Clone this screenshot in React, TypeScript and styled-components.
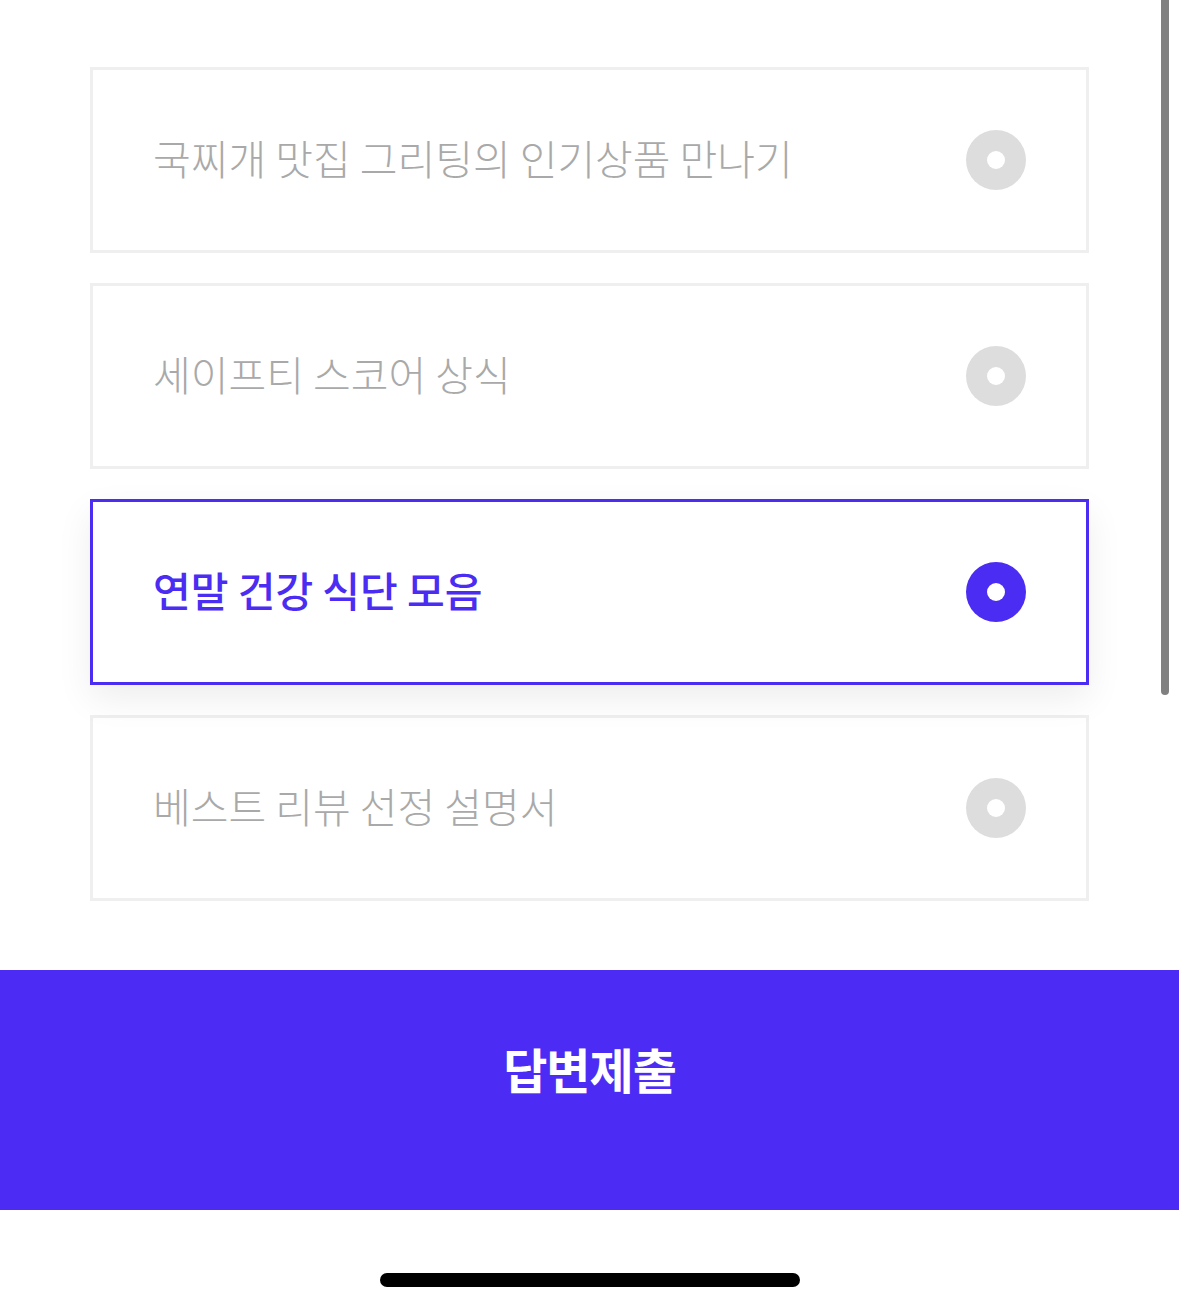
import styled, { createGlobalStyle } from 'styled-components';
import { useState } from 'react';

const GlobalStyle = createGlobalStyle`
  html, body {
    margin: 0;
    padding: 0;
    background: #ffffff;
  }
  body {
    font-family: 'Noto Sans CJK KR', 'Noto Sans', sans-serif;
  }
`;

const Page = styled.div`
  width: 1179px;
  height: 1312px;
  position: relative;
  display: flex;
  flex-direction: column;
  overflow: hidden;
  background: #ffffff;
`;

const OptionList = styled.div`
  display: flex;
  flex-direction: column;
  gap: 30px;
  padding: 67px 90px 0;
`;

const Option = styled.button<{ selected: boolean }>`
  height: 186px;
  box-sizing: border-box;
  display: flex;
  align-items: center;
  justify-content: space-between;
  padding: 0 60px 0 60px;
  background: #ffffff;
  border: 3px solid ${(props) => (props.selected ? '#4b2cf2' : '#efefef')};
  box-shadow: ${(props) =>
    props.selected ? '0 14px 34px rgba(0, 0, 0, 0.07)' : 'none'};
  cursor: pointer;
  text-align: start;
  font-family: inherit;
  position: relative;
  z-index: ${(props) => (props.selected ? 1 : 0)};
`;

const Label = styled.span<{ selected: boolean }>`
  font-size: 41px;
  line-height: 1;
  padding-bottom: 6px;
  letter-spacing: 0;
  font-weight: ${(props) => (props.selected ? 500 : 300)};
  color: ${(props) => (props.selected ? '#4b2cf2' : '#a9a9a9')};
`;

const Radio = styled.span<{ selected: boolean }>`
  width: 60px;
  height: 60px;
  border-radius: 50%;
  background: ${(props) => (props.selected ? '#4b2cf2' : '#dddddd')};
  display: flex;
  align-items: center;
  justify-content: center;
  flex-shrink: 0;

  &::after {
    content: '';
    width: 18px;
    height: 18px;
    border-radius: 50%;
    background: #ffffff;
  }
`;

const SubmitButton = styled.button`
  margin-top: 69px;
  height: 240px;
  width: 100%;
  border: none;
  background: #4c2cf4;
  color: #ffffff;
  font-family: inherit;
  font-size: 48px;
  font-weight: 700;
  letter-spacing: -1px;
  padding: 0 0 45px;
  cursor: pointer;
`;

const HomeArea = styled.div`
  flex: 1;
  display: flex;
  justify-content: center;
  padding-top: 63px;
`;

const HomeIndicator = styled.div`
  width: 420px;
  height: 14px;
  border-radius: 7px;
  background: #000000;
`;

const ScrollThumb = styled.div`
  position: absolute;
  top: 0;
  right: 10px;
  width: 8px;
  height: 695px;
  background: #808080;
  border-radius: 0 0 4px 4px;
  z-index: 3;
`;

const options = [
  '국찌개 맛집 그리팅의 인기상품 만나기',
  '세이프티 스코어 상식',
  '연말 건강 식단 모음',
  '베스트 리뷰 선정 설명서',
];

export default function App() {
  const [selected, setSelected] = useState<number>(2);

  return (
    <Page>
      <GlobalStyle />
      <OptionList>
        {options.map((text, idx) => (
          <Option
            key={text}
            selected={selected === idx}
            onClick={() => setSelected(idx)}
          >
            <Label selected={selected === idx}>{text}</Label>
            <Radio selected={selected === idx} />
          </Option>
        ))}
      </OptionList>
      <SubmitButton>답변제출</SubmitButton>
      <HomeArea>
        <HomeIndicator />
      </HomeArea>
      <ScrollThumb />
    </Page>
  );
}
